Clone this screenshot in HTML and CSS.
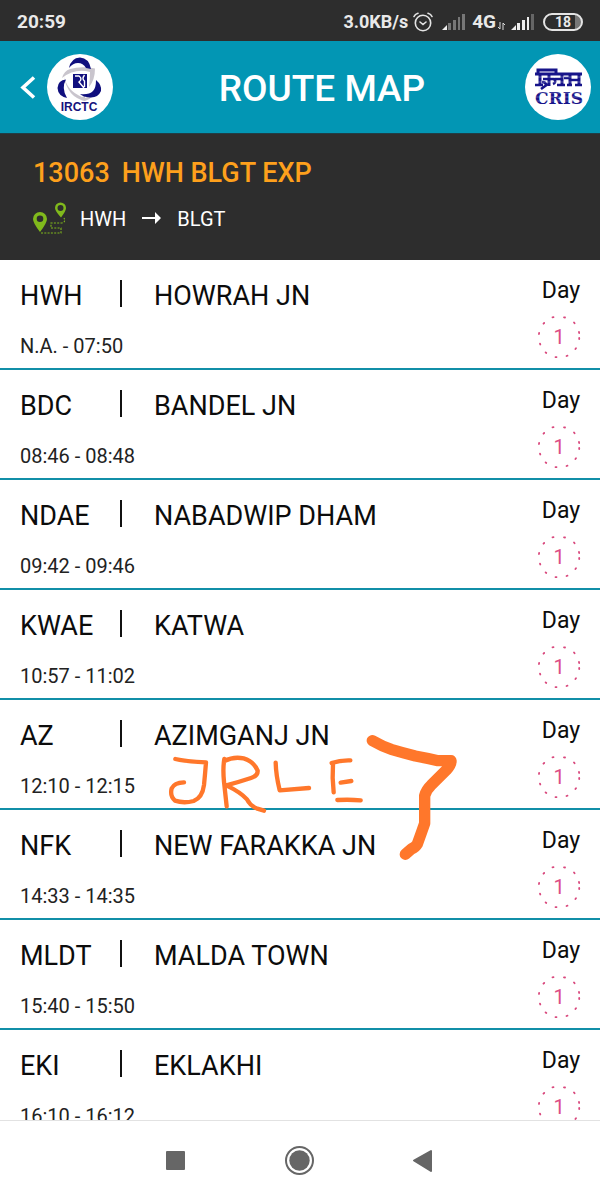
FILE: index.html
```html
<!DOCTYPE html>
<html lang="en">
<head>
<meta charset="utf-8">
<meta name="viewport" content="width=device-width, initial-scale=1">
<title>Route Map</title>
<link rel="stylesheet" href="styles.css">
</head>
<body>
<svg class="defs" aria-hidden="true">
  <symbol id="ring" viewBox="0 0 44 44">
    <path d="M15.500 2.300l1-.2M27 2.300l1 .2M37 7.500l.6.800M42 17l.1 1M42.200 23v1M39 33.200l-.6.800M30.500 40.700l-1 .3M19.500 42.200l-1-.1M9.300 38l-.7-.6M3.300 29.500l-.3-.9M2 19l.1-1M6.500 8.700l.7-.7" fill="none" stroke="#d9487d" stroke-width="1.800" stroke-linecap="round"/>
  </symbol>
</svg>
<div class="screen">
  <div class="status">
    <span class="clock">20:59</span>
    <span class="speed">3.0KB/s</span>
    <svg class="alarm" width="20" height="20" viewBox="0 0 20 20" fill="none" stroke="#e4e4e4" stroke-width="1.600" stroke-linecap="round"><circle cx="10" cy="11" r="7.700"/><path d="M1 4.500Q2 2 5 1.200M19 4.500Q18 2 15 1.200M7 10l3 2.500 3-2.500"/></svg>
    <svg class="signal" width="23" height="17" viewBox="0 0 23 17"><path fill="#eee" d="M0 17l5-5v5z"/><path fill="#777" d="M6 10h3v7H6zM11 7h3v10h-3zM16 4h2v13h-2zM20 1h3v16h-3z"/></svg>
    <span class="network">4G</span>
    <svg class="data" width="7" height="8" viewBox="0 0 7 8" fill="none" stroke="#ddd"><path d="M2 0v7M0 5l2 2M5 8V1l2 2"/></svg>
    <svg class="signal" width="23" height="17" viewBox="0 0 23 17"><path fill="#eee" d="M0 17l5-5v5zM6 10h3v7H6zM11 7h3v10h-3zM16 4h2v13h-2z"/><path fill="#666" d="M20 1h3v16h-3z"/></svg>
    <span class="battery">18</span>
  </div>

  <header class="bar">
    <button class="back" type="button" aria-label="Back"><svg width="16" height="24" viewBox="0 0 16 24" fill="none" stroke="#fff" stroke-width="3.600"><path d="M14 2.500L3 12.500l11 10"/></svg></button>
    <svg class="logo" width="66" height="66" viewBox="0 0 66 66" role="img" aria-label="IRCTC">
      <circle cx="33" cy="33" r="33" fill="#fff"/>
      <g fill="#c9c5cd">
        <path d="M15 24Q17 17 23 15Q34 12 48 14.500Q48 26 42 33Q43 25 43 18Q28 14 15 24z"/>
        <path d="M17 22Q20 37 35 43l3-1v5Q20 43 17 22z"/>
        <path d="M51 31Q47 41 34 46l4 1Q49 43 51 31z"/>
      </g>
      <g fill="#100f7e">
        <path d="M22 14Q24 4 33 3.500Q42 4 44 15L39 14Q36 9 31 9Q26 9 22 14z"/>
        <path d="M19 25.500Q11 26 10.500 34Q11 42 20 44Q14 34 19 25.500z"/>
        <path d="M49 26Q55 31 54 37Q51 44 43 43.500Q36 43 33 40Q42 41 46 37Q49 34 49 26z"/>
        <path d="M26 20h14v14H26z"/>
      </g>
      <path d="M28 22h4q4 3 0 6l5 6M37.500 21q-3 4 0 6v6" fill="none" stroke="#fff" stroke-width="1.400"/>
      <text class="logo-name" x="32" y="57" text-anchor="middle">IRCTC</text>
    </svg>
    <h1 class="title">ROUTE MAP</h1>
    <svg class="logo" width="66" height="66" viewBox="0 0 66 66" role="img" aria-label="CRIS">
      <circle cx="33" cy="33" r="33" fill="#fff"/>
      <g fill="none" stroke="#17148a" stroke-width="3">
        <path d="M10 20h47M13 21v-5h18v4M15 20v11M24 20v12M37 19v13M45 20v11M54 19v13" />
        <path d="M18 25h11q3 3-1 5M17 28q4 0 4 3M30 25h7M39 24h5M45 26h9M10 31h8M32 31h8M42 31h5M50 31h7M16 35l7-5" stroke-width="2.600"/>
      </g>
      <text class="logo-cris" x="34" y="50" text-anchor="middle">CRIS</text>
      <path d="M10 23h47M10 28h47M10 39h47M10 43h47M10 47h47" stroke="#fff" stroke-width=".6" opacity=".5"/>
    </svg>
  </header>

  <section class="summary">
    <h2 class="train"><span>13063</span><span>HWH BLGT EXP</span></h2>
    <div class="trip">
      <svg width="34" height="34" viewBox="0 0 34 34"><g fill="#80b91c" fill-rule="evenodd"><path d="M7 30Q0 21 0 17a7 7 0 0 1 14 0q0 4-7 13zM7 13.500a3.300 3.300 0 1 0 0 6.600 3.300 3.300 0 0 0 0-6.600z"/><path d="M28 15.500Q22 9 22 6a5.500 5.500 0 0 1 11 0q0 3-5 9.500zM27.500 3a3 3 0 1 0 0 6 3 3 0 0 0 0-6z"/></g><path d="M8 31h20v-5H18v-5h11q4-1 2-5" fill="none" stroke="#80b91c" stroke-width="1.100" stroke-dasharray="2 1.300"/></svg>
      <span>HWH</span>
      <svg class="arrow" width="20" height="14" viewBox="0 0 20 14"><path d="M0 5h13V0l6 6-6 6V7H0z" fill="#fff"/></svg>
      <span>BLGT</span>
    </div>
  </section>

  <main class="list">
    <ol class="stops">
      <li class="stop"><span class="code">HWH</span><span class="name">HOWRAH JN</span><span class="time">N.A. - 07:50</span><span class="day">Day</span><span class="num"><svg><use href="#ring"/></svg><span>1</span></span></li>
      <li class="stop"><span class="code">BDC</span><span class="name">BANDEL JN</span><span class="time">08:46 - 08:48</span><span class="day">Day</span><span class="num"><svg><use href="#ring"/></svg><span>1</span></span></li>
      <li class="stop"><span class="code">NDAE</span><span class="name">NABADWIP DHAM</span><span class="time">09:42 - 09:46</span><span class="day">Day</span><span class="num"><svg><use href="#ring"/></svg><span>1</span></span></li>
      <li class="stop"><span class="code">KWAE</span><span class="name">KATWA</span><span class="time">10:57 - 11:02</span><span class="day">Day</span><span class="num"><svg><use href="#ring"/></svg><span>1</span></span></li>
      <li class="stop"><span class="code">AZ</span><span class="name">AZIMGANJ JN</span><span class="time">12:10 - 12:15</span><span class="day">Day</span><span class="num"><svg><use href="#ring"/></svg><span>1</span></span></li>
      <li class="stop"><span class="code">NFK</span><span class="name">NEW FARAKKA JN</span><span class="time">14:33 - 14:35</span><span class="day">Day</span><span class="num"><svg><use href="#ring"/></svg><span>1</span></span></li>
      <li class="stop"><span class="code">MLDT</span><span class="name">MALDA TOWN</span><span class="time">15:40 - 15:50</span><span class="day">Day</span><span class="num"><svg><use href="#ring"/></svg><span>1</span></span></li>
      <li class="stop"><span class="code">EKI</span><span class="name">EKLAKHI</span><span class="time">16:10 - 16:12</span><span class="day">Day</span><span class="num"><svg><use href="#ring"/></svg><span>1</span></span></li>
    </ol>
    <svg class="ink" width="330" height="160" viewBox="0 0 990 480" role="img" aria-label="Handwritten note: JRLE" fill="none" stroke="#ff772b" stroke-linecap="round" stroke-linejoin="round">
      <g stroke-width="13">
        <path d="M76 147Q106 154 168 157Q165 195 162 225Q157 263 131 273Q101 281 75 272Q59 258 65 235Q73 218 102 217"/>
        <path d="M223 147Q218 175 222 215L230 289M223 153Q250 139 281 145Q310 153 323 182Q324 197 303 204Q270 215 229 226Q271 246 291 268Q300 287 322 296L342 302"/>
        <path d="M377 158Q378 196 389 241L477 234M545 159Q570 150 601 151M549 163L548 204L551 247M572 218L604 213M562 270Q600 268 632 271"/>
      </g>
      <g stroke-width="34"><path d="M667 92Q698 110 726 119Q760 129 796 138Q830 144 864 152L903 152Q904 164 889 180L843 226Q829 239 824 257L824 340Q814 369 802 402Q797 411 784 417L766 433"/></g>
    </svg>
  </main>

  <nav class="nav">
    <button type="button" aria-label="Recent apps"><svg width="30" height="30" viewBox="0 0 30 30"><rect x="5" y="5" width="19" height="19" rx="1" fill="#666"/></svg></button>
    <button type="button" aria-label="Home"><svg width="30" height="30" viewBox="0 0 30 30"><circle cx="14.500" cy="14.500" r="13.500" fill="none" stroke="#666" stroke-width="2"/><circle cx="14.500" cy="14.500" r="10.200" fill="#666"/></svg></button>
    <button type="button" aria-label="Back"><svg width="30" height="30" viewBox="0 0 30 30"><path d="M5 14.500L22 5v20z" fill="#666" stroke="#666" stroke-width="2" stroke-linejoin="round"/></svg></button>
  </nav>
</div>
</body>
</html>
```
FILE: styles.css
```css
* { box-sizing: border-box; }
body { margin: 0; font-family: Roboto, "Liberation Sans", sans-serif; color: #0c0c0c; background: #fff; }
svg { display: block; flex: none; }
button { border: 0; padding: 0; background: none; }
h1, h2, ol { margin: 0; padding: 0; }
.defs { position: absolute; width: 0; height: 0; }
.screen { display: flex; flex-direction: column; height: 100vh; }

.status { display: flex; align-items: center; flex: none; height: 41px; padding: 2px 17px 0; background: #2d2d2d; color: #e9e9e9; font-size: 19px; font-weight: 700; }
.clock { flex: 1; }
.speed { font-size: 18px; margin-right: 5px; }
.alarm { margin-right: 9px; }
.signal { margin-right: 4px; }
.network { margin-left: 3px; }
.data { margin: 8px 6px 0 2px; }
.battery { width: 40px; height: 18px; margin-left: 5px; border: 2px solid #e4e4e4; border-radius: 9px; background: linear-gradient(90deg, transparent 30px, #777 30px); font-size: 14px; line-height: 14px; text-align: center; }

.bar { display: flex; align-items: center; flex: none; height: 93px; padding: 0 9px 0 20px; background: #0296b4; border-bottom: 1px solid #203e46; }
.back { margin-right: 11px; }
.title { flex: 1; padding: 2px 0 0 6px; color: #fff; font-size: 37px; font-weight: 500; text-align: center; }
.logo-name { fill: #14127c; font-size: 12px; font-weight: 700; font-family: "Liberation Sans", sans-serif; }
.logo-cris { fill: #17148a; font-size: 17px; font-weight: 700; font-family: "DejaVu Serif", serif; }

.summary { flex: none; height: 126px; padding: 24px 33px 0; background: #2d2d2d; color: #fff; }
.train { display: flex; gap: 12px; color: #fea01c; font-size: 27px; line-height: 30px; font-weight: 500; }
.trip { display: flex; align-items: center; margin-top: 14px; font-size: 20px; line-height: 34px; }
.trip span { margin-left: 13px; }
.arrow { margin: 0 2px 0 16px; }

.list { position: relative; flex: 1; min-height: 0; overflow: hidden; }
.stops { list-style: none; }
.stop { display: grid; grid-template: 52px 56px / 100px 1fr 60px; height: 110px; padding: 0 9px 0 20px; border-bottom: 2px solid #118fa8; }
.code, .name { font-size: 27px; line-height: 32px; padding-top: 20px; }
.name { display: flex; }
.name::before { content: ""; width: 2px; height: 27px; margin-right: 32px; background: #111; }
.time { grid-column: 1 / 3; grid-row: 2; padding-top: 22px; font-size: 20px; line-height: 24px; color: #222; }
.day { grid-column: 3; padding-top: 17px; font-size: 23px; line-height: 28px; text-align: center; }
.num { grid-column: 3; grid-row: 2; display: grid; place-items: center; align-self: start; justify-self: center; width: 44px; height: 44px; margin: 3px 4px 0 0; color: #dc4c86; font-size: 20px; }
.num > * { grid-area: 1 / 1; }
.num svg { width: 44px; height: 44px; }
.ink { position: absolute; left: 150px; top: 450px; }

.nav { display: flex; justify-content: center; align-items: center; gap: 94px; flex: none; height: 80px; border-top: 1px solid #e2e2e2; background: #fff; }
```
